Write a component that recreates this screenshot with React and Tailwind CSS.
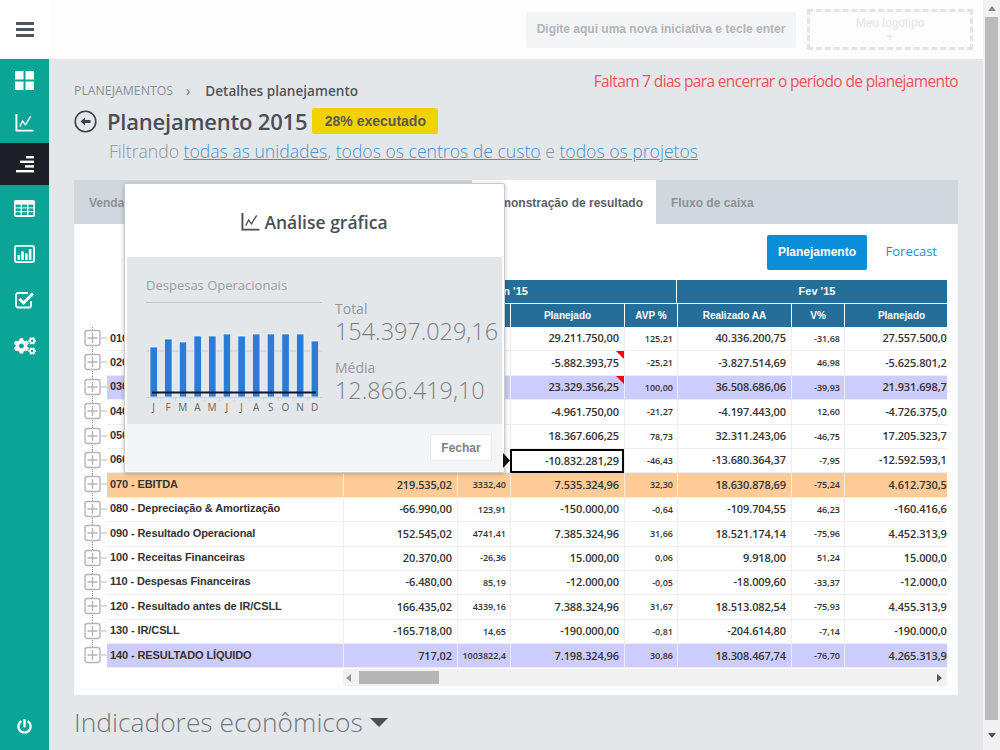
import React from 'react';
import { FaCogs, FaPowerOff } from 'react-icons/fa';

const openSans = "font-['Open_Sans',sans-serif]";
const arial = "font-['Liberation_Sans',Arial,sans-serif]";

const ChartIcon = ({ className }) => (
  <svg viewBox="0 0 20 20" className={className} fill="none" stroke="currentColor" strokeWidth="2">
    <path d="M1.5 1v17.5h18" />
    <path d="M5 14.5l3-6 3 4 5.5-9" strokeWidth="1.4" />
  </svg>
);

const GridIcon = () => (
  <svg viewBox="0 0 19 19" className="w-[19px] h-[19px]" fill="#fff">
    <rect x="0" y="0" width="8.5" height="8.5" />
    <rect x="10.5" y="0" width="8.5" height="8.5" />
    <rect x="0" y="10.5" width="8.5" height="8.5" />
    <rect x="10.5" y="10.5" width="8.5" height="8.5" />
  </svg>
);

const AlignIcon = () => (
  <svg viewBox="0 0 18 17" className="w-[18px] h-[17px]" fill="#fff">
    <rect x="10" y="0" width="8" height="2.4" />
    <rect x="4" y="4.6" width="14" height="2.4" />
    <rect x="9" y="9.2" width="9" height="2.4" />
    <rect x="0" y="14" width="18" height="2.4" />
  </svg>
);

const TableIcon = () => (
  <svg viewBox="0 0 21 17" className="w-[21px] h-[17px]">
    <rect width="21" height="17" rx="2" fill="#fff" />
    {[1.6, 8, 14.4].map((x) =>
      [4.6, 8.4, 12.2].map((y) => <rect key={x + '-' + y} x={x} y={y} width="5" height="2.8" fill="#0aa597" />)
    )}
  </svg>
);

const BarsIcon = () => (
  <svg viewBox="0 0 21 18" className="w-[21px] h-[18px]">
    <rect x="0.9" y="0.9" width="19.2" height="16.2" rx="2" fill="none" stroke="#fff" strokeWidth="1.8" />
    <rect x="3.5" y="10" width="2.6" height="5" fill="#fff" />
    <rect x="7.2" y="6.5" width="2.6" height="8.5" fill="#fff" />
    <rect x="11" y="8.5" width="2.6" height="6.5" fill="#fff" />
    <rect x="14.8" y="4" width="2.6" height="11" fill="#fff" />
  </svg>
);

const CheckIcon = () => (
  <svg viewBox="0 0 20 18" className="w-[20px] h-[18px]" fill="none" stroke="#fff">
    <path d="M16 10v4.5a2 2 0 0 1-2 2H3a2 2 0 0 1-2-2V4a2 2 0 0 1 2-2h10" strokeWidth="1.8" />
    <path d="M4.5 8l4 4L18 2.5" strokeWidth="3" />
  </svg>
);

const sideItems = [
  { h: 'h-[42px]', icon: <GridIcon /> },
  { h: 'h-[42px]', icon: <ChartIcon className="w-[19px] h-[19px] text-white" /> },
  { h: 'h-[42px] bg-[#1c1f26]', icon: <AlignIcon /> },
  { h: 'h-[46px]', icon: <TableIcon /> },
  { h: 'h-[46px]', icon: <BarsIcon /> },
  { h: 'h-[46px]', icon: <CheckIcon /> },
  { h: 'h-[46px]', icon: <FaCogs className="text-white text-[22px]" /> },
];

const rows = [
  { label: '010 - Receita Bruta', c: ['', '', '29.211.750,00', '125,21', '40.336.200,75', '-31,68', '27.557.500,00'] },
  { label: '020 - Deduções', c: ['', '', '-5.882.393,75', '-25,21', '-3.827.514,69', '46,98', '-5.625.801,25'], flag: true },
  { label: '030 - Receita Líquida', c: ['', '', '23.329.356,25', '100,00', '36.508.686,06', '-39,93', '21.931.698,75'], bg: 'bg-[#ccccff]', flag: true },
  { label: '040 - Custos', c: ['', '', '-4.961.750,00', '-21,27', '-4.197.443,00', '12,60', '-4.726.375,00'] },
  { label: '050 - Margem Bruta', c: ['', '', '18.367.606,25', '78,73', '32.311.243,06', '-46,75', '17.205.323,75'] },
  { label: '060 - Despesas Operacionais', c: ['', '', '-10.832.281,29', '-46,43', '-13.680.364,37', '-7,95', '-12.592.593,10'], selected: true },
  { label: '070 - EBITDA', c: ['219.535,02', '3332,40', '7.535.324,96', '32,30', '18.630.878,69', '-75,24', '4.612.730,50'], bg: 'bg-[#ffcc99]' },
  { label: '080 - Depreciação & Amortização', c: ['-66.990,00', '123,91', '-150.000,00', '-0,64', '-109.704,55', '46,23', '-160.416,60'] },
  { label: '090 - Resultado Operacional', c: ['152.545,02', '4741,41', '7.385.324,96', '31,66', '18.521.174,14', '-75,96', '4.452.313,90'] },
  { label: '100 - Receitas Financeiras', c: ['20.370,00', '-26,36', '15.000,00', '0,06', '9.918,00', '51,24', '15.000,00'] },
  { label: '110 - Despesas Financeiras', c: ['-6.480,00', '85,19', '-12.000,00', '-0,05', '-18.009,60', '-33,37', '-12.000,00'] },
  { label: '120 - Resultado antes de IR/CSLL', c: ['166.435,02', '4339,16', '7.388.324,96', '31,67', '18.513.082,54', '-75,93', '4.455.313,90'] },
  { label: '130 - IR/CSLL', c: ['-165.718,00', '14,65', '-190.000,00', '-0,81', '-204.614,80', '-7,14', '-190.000,00'] },
  { label: '140 - RESULTADO LÍQUIDO', c: ['717,02', '1003822,4', '7.198.324,96', '30,86', '18.308.467,74', '-76,70', '4.265.313,90'], bg: 'bg-[#ccccff]' },
];

const subHeaders = ['Realizado', 'V%', 'Planejado', 'AVP %', 'Realizado AA', 'V%', 'Planejado'];
const bars = [347, 339, 342, 336, 336, 334, 336, 334, 334, 334, 334, 341];
const months = ['J', 'F', 'M', 'A', 'M', 'J', 'J', 'A', 'S', 'O', 'N', 'D'];
const grid = 'grid grid-cols-[236px_114px_53px_114px_53px_114px_53px_114px]';

const TreeNode = ({ last }) => (
  <svg viewBox="0 0 23 24.4" className="w-[23px] h-[24.4px] shrink-0">
    <path d={last ? 'M8.5 0v4' : 'M8.5 0v24.4'} stroke="#888" strokeWidth="1" strokeDasharray="1 1" />
    <path d="M17 11h6" stroke="#bbb" strokeWidth="1" />
    <rect x="1" y="3.5" width="15" height="15" rx="2.5" fill="#fff" stroke="#b5b5b5" strokeWidth="1.4" />
    <path d="M3.5 11h10M8.5 6v10" stroke="#b5b5b5" strokeWidth="1.4" />
  </svg>
);

const Row = ({ row, last }) => (
  <div className="flex h-[24.4px]">
    <TreeNode last={last} />
    <div className={`${grid} w-[840px] overflow-hidden ${row.bg || 'bg-white'}`}>
      <div className={`${arial} font-bold text-[11px] tracking-[-0.1px] text-[#333] pl-[3px] pt-[3.5px] leading-[14px] whitespace-nowrap border-b border-[#eee]`}>
        {row.label}
      </div>
      {row.c.map((v, i) => {
        const selected = i === 2 && row.selected;
        return (
          <div
            key={i}
            className={`relative ${openSans} text-right flex items-center justify-end whitespace-nowrap text-[#333] ${
              i % 2 === 0 ? 'font-semibold text-[11px] tracking-[-0.1px]' : 'font-semibold text-[9px] pr-[4px]'
            } ${selected ? 'border-2 border-black pr-[3px]' : `border-l border-b ${row.bg ? 'border-white/60' : 'border-[#eee]'}`} ${
              i % 2 === 0 && !selected ? 'pr-[5px]' : ''
            }`}
          >
            {v}
            {i === 2 && row.flag && (
              <svg viewBox="0 0 8 8" className="absolute top-0 right-0 w-[8px] h-[8px]">
                <path d="M0 0h8v8z" fill="#f00" />
              </svg>
            )}
            {selected && (
              <svg viewBox="0 0 7 15" className="absolute z-10 top-[2px] left-[-9px] w-[7px] h-[15px]">
                <path d="M0 0l7 7.5-7 7.5z" fill="#111" />
              </svg>
            )}
          </div>
        );
      })}
    </div>
  </div>
);

const Popup = () => (
  <div className="absolute left-[124px] top-[183px] w-[381px] h-[290px] bg-white rounded-[2px] border border-[#ccc] shadow-[0_1px_4px_rgba(0,0,0,0.25)] px-[2px] pb-[1px] flex flex-col">
    <div className="h-[73px] pt-[4px] flex items-center justify-center gap-[4px] text-[#4a4f57]">
      <ChartIcon className="w-[19px] h-[19px] mb-[3px]" />
      <span className={`${openSans} font-semibold text-[17.5px]`}>Análise gráfica</span>
    </div>
    <div className="h-[167px] bg-[#e4e7ea] flex">
      <div className="w-[208px] pl-[19px] shrink-0">
        <div className={`${openSans} text-[13px] text-[#9aa0a6] h-[46px] pt-[18px] leading-[20px] border-b border-[#c4c8cc] w-[176px]`}>
          Despesas Operacionais
        </div>
        <svg viewBox="146 330 178 88" className="w-[178px] h-[88px] mt-[27px]">
          <path d="M146 351h177" stroke="#c9ccd0" strokeWidth="1" />
          {bars.map((top, i) => (
            <rect key={i} x={150 + i * 14.65} y={top} width="7.4" height={397 - top} fill="#2d7bd8" stroke="#f4f6f8" strokeWidth="0.7" />
          ))}
          <path d="M146 397.5h177" stroke="#c6d4e0" strokeWidth="1" />
          {months.map((_, i) => (
            <path key={i} d={`M${146 + i * 14.7} 397v4`} stroke="#c6d4e0" strokeWidth="1" />
          ))}
          <path d="M152 392.5h164" stroke="#10182a" strokeWidth="2" />
          {months.map((m, i) => (
            <text key={i} x={153.5 + i * 14.65} y="411" textAnchor="middle" fontSize="10" fontFamily="Open Sans" fill="#666">
              {m}
            </text>
          ))}
        </svg>
      </div>
      <div className={`${openSans} text-[#7b8086] pt-[42px] whitespace-nowrap`}>
        <div className="text-[14px] leading-[20px] text-[#93989e]">Total</div>
        <div className="text-[23.4px] leading-[25px] font-light">154.397.029,16</div>
        <div className="text-[14px] leading-[20px] text-[#93989e] mt-[14px]">Média</div>
        <div className="text-[23.4px] leading-[25px] font-light">12.866.419,10</div>
      </div>
    </div>
    <div className="flex-1 bg-[#f3f5f6] flex items-start justify-end pt-[10px] pr-[10px]">
      <div className={`${arial} font-bold w-[62px] h-[27px] bg-white border border-[#eaeaea] rounded-[2px] text-[12px] text-[#808080] flex items-center justify-center`}>
        Fechar
      </div>
    </div>
  </div>
);

const App = () => {
  return (
    <div className="relative w-[1000px] h-[750px] overflow-hidden flex bg-[#e4e7ea]">
      <aside className="w-[49px] shrink-0 flex flex-col bg-[#0aa597]">
        <div className="h-[59px] bg-white flex items-center justify-center">
          <div className="w-[18px] flex flex-col gap-[3px]">
            <div className="h-[3px] bg-[#50555f]" />
            <div className="h-[3px] bg-[#50555f]" />
            <div className="h-[3px] bg-[#50555f]" />
          </div>
        </div>
        {sideItems.map((item, i) => (
          <div key={i} className={`${item.h} flex items-center justify-center`}>
            {item.icon}
          </div>
        ))}
        <div className="mt-auto h-[48px] flex items-center justify-center">
          <FaPowerOff className="text-white text-[15px]" />
        </div>
      </aside>

      <main className="flex-1 min-w-0">
        <header className="h-[59px] bg-[#fdfdfd] flex items-center justify-end pr-[10px] gap-[11px]">
          <div className={`${arial} font-bold w-[270px] h-[36px] pb-[1px] bg-[#f3f4f6] rounded-[2px] text-[12px] text-[#b3b5b8] flex items-center justify-center`}>
            Digite aqui uma nova iniciativa e tecle enter
          </div>
          <div className={`${arial} w-[166px] h-[41px] border-[3px] border-dashed border-[#e4e4e4] text-[12px] leading-[14px] text-[#e2e3e5] flex flex-col items-center justify-center`}>
            <span>Meu logotipo</span>
            <span>+</span>
          </div>
        </header>

        <div className="px-[25px]">
          <div className={`${openSans} relative h-[121px]`}>
            <div className="absolute right-0 top-[11px] text-[15.5px] text-[#f4515a] tracking-[-0.65px] leading-[22px]">
              Faltam 7 dias para encerrar o período de planejamento
            </div>
            <div className="pt-[23px] flex items-center leading-[18px]">
              <span className="text-[#8a8f95] text-[12.3px]">PLANEJAMENTOS</span>
              <span className="text-[#6a6f75] ml-[13px] mr-[15px] text-[14px]">›</span>
              <span className="text-[#50555b] font-semibold text-[13.6px]">Detalhes planejamento</span>
            </div>
            <div className="flex items-center mt-[6px] h-[30px]">
              <svg viewBox="0 0 23 23" className="w-[23px] h-[23px] mr-[10px]">
                <circle cx="11.5" cy="11.5" r="10.3" fill="none" stroke="#3d424a" strokeWidth="1.6" />
                <path d="M6.5 11.5l4.5-4v2.6h5.5v2.8H11v2.6z" fill="#3d424a" />
              </svg>
              <h1 className="text-[22px] tracking-[-0.2px] font-semibold text-[#4a4f57] leading-[30px] -mt-[1px]">Planejamento 2015</h1>
              <span className={`${arial} font-bold ml-[5px] w-[126px] h-[26px] bg-[#f2d300] rounded-[2px] text-[14px] text-[#5a5a50] flex items-center justify-center`}>
                28% executado
              </span>
            </div>
            <div className="pl-[35px] mt-[3px] text-[17.6px] font-light leading-[24px] text-[#8d959c]">
              Filtrando <a className="text-[#3d94d6] underline">todas as unidades</a>, <a className="text-[#3d94d6] underline">todos os centros de custo</a> e{' '}
              <a className="text-[#3d94d6] underline">todos os projetos</a>
            </div>
          </div>

          <section className="bg-white h-[515px]">
            <div className={`${arial} font-bold h-[44px] bg-[#d1d8dd] flex text-[12px] text-[#8c9297] pt-[1px]`}>
              <div className="w-[398px] pl-[15px] flex items-center">Vendas</div>
              <div className="w-[184px] bg-white text-[#5c6066] flex items-center justify-center whitespace-nowrap -mt-[1px] pt-[1px]">Demonstração de resultado</div>
              <div className="pl-[15px] flex items-center">Fluxo de caixa</div>
            </div>

            <div className="h-[45px] mt-[11px] pr-[21px] flex justify-end text-[12px]">
              <div className={`${arial} font-bold w-[100px] h-[35px] pb-[1px] bg-[#0b8ed8] rounded-[2px] text-white flex items-center justify-center`}>Planejamento</div>
              <div className={`${openSans} w-[70px] h-[35px] pb-[1px] text-[13px] text-[#1f8fd6] flex items-center justify-end`}>Forecast</div>
            </div>

            <div className="ml-[10px]">
              <div className="flex">
                <div className="w-[259px] shrink-0" />
                <div className={`${arial} font-bold w-[604px] overflow-hidden text-[10px] text-white`}>
                  <div className="grid grid-cols-[334px_280px] h-[23px]">
                    <div className="bg-[#246f99] flex items-center justify-center border-r border-white text-[11px]">Jan '15</div>
                    <div className="bg-[#246f99] flex items-center justify-center text-[11px]">Fev '15</div>
                  </div>
                  <div className="grid grid-cols-[114px_53px_114px_53px_114px_53px_114px] h-[24px]">
                    {subHeaders.map((h, i) => (
                      <div key={i} className="bg-[#246f99] border-l border-t border-white flex items-center justify-center">{h}</div>
                    ))}
                  </div>
                </div>
              </div>
              {rows.map((row, i) => (
                <Row key={row.label} row={row} last={i === rows.length - 1} />
              ))}
              <div className="ml-[259px] w-[604px] h-[17px] mt-[1px] bg-[#f1f1f1] flex items-center px-[3px]">
                <svg viewBox="0 0 6 8" className="w-[6px] h-[8px] shrink-0"><path d="M5 0L0 4l5 4z" fill="#999" /></svg>
                <div className="w-[80px] h-[13px] bg-[#b5b5b5] ml-[7px]" />
                <svg viewBox="0 0 6 8" className="w-[6px] h-[8px] shrink-0 ml-auto mr-[1px]"><path d="M0 0l5 4-5 4z" fill="#555" /></svg>
              </div>
            </div>
          </section>

          <div className={`${openSans} font-light text-[26.4px] text-[#72787f] mt-[10px] leading-[34px] flex items-center gap-[7px]`}>
            Indicadores econômicos
            <svg viewBox="0 0 18 9" className="w-[18px] h-[9px]"><path d="M0 0h18L9 9z" fill="#4b4f55" /></svg>
          </div>
        </div>
      </main>

      <div className="w-[17px] shrink-0 bg-[#f1f1f1] flex flex-col items-center">
        <div className="h-[17px] flex items-center justify-center">
          <svg viewBox="0 0 8 5" className="w-[8px] h-[5px]"><path d="M4 0l4 5H0z" fill="#888" /></svg>
        </div>
        <div className="w-[13px] h-[703px] bg-[#bbb]" />
        <div className="flex-1 flex items-center justify-center">
          <svg viewBox="0 0 8 5" className="w-[8px] h-[5px]"><path d="M0 0h8L4 5z" fill="#555" /></svg>
        </div>
      </div>

      <Popup />
    </div>
  );
};

export default App;
